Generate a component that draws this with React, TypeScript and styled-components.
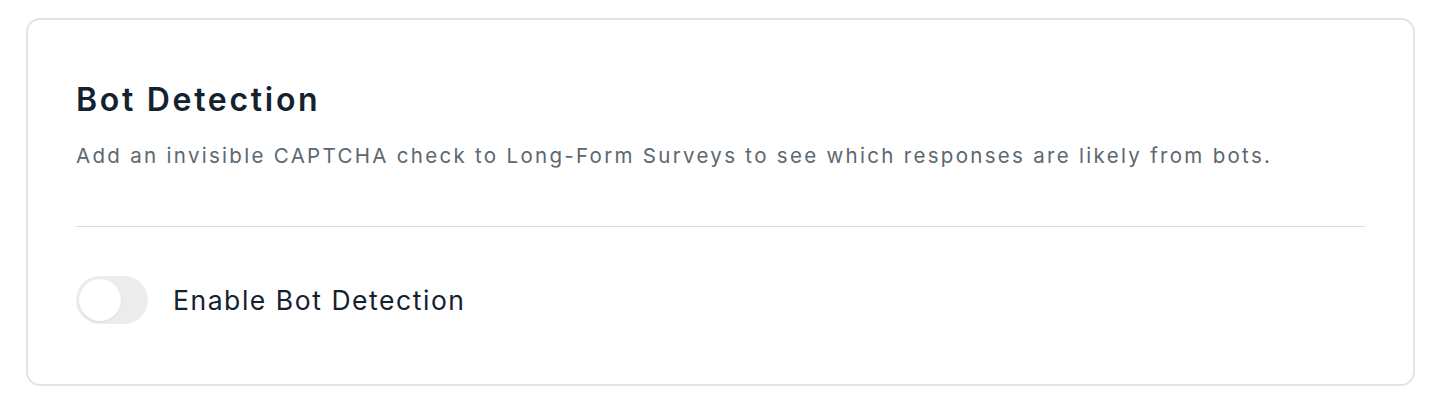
import React, { useState } from 'react';
import styled, { createGlobalStyle } from 'styled-components';

const GlobalStyle = createGlobalStyle`
    html, body {
        margin: 0;
        padding: 0;
        background: #ffffff;
    }
    body {
        font-family: Inter, 'Noto Sans', sans-serif;
        -webkit-font-smoothing: antialiased;
    }
`;

const Page = styled.div`
    padding: 18px 25px 20px 26px;
`;

const Card = styled.section`
    border: 2px solid #e4e4e4;
    border-radius: 14px;
    padding: 0 48px;
    background: #fff;
`;

const Header = styled.div`
    padding: 60px 0 56px;
    border-bottom: 1px solid #dcdcdc;
`;

const Title = styled.h2`
    margin: 0;
    font-size: 32px;
    line-height: 40px;
    font-weight: 600;
    color: #13222e;
    letter-spacing: 2.7px;
`;

const Description = styled.p`
    margin: 22px 0 0;
    font-size: 20.5px;
    line-height: 28px;
    color: #5c6770;
    letter-spacing: 2.3px;
    white-space: nowrap;
`;

const ToggleRow = styled.label`
    display: flex;
    align-items: center;
    gap: 25px;
    padding: 49px 0 60px;
    cursor: pointer;
`;

const Track = styled.span<{ $on: boolean }>`
    position: relative;
    width: 72px;
    height: 48px;
    border-radius: 24px;
    background: ${(p) => (p.$on ? '#1f7a5c' : '#ececec')};
    flex-shrink: 0;
    transition: background 0.2s;
`;

const Knob = styled.span<{ $on: boolean }>`
    position: absolute;
    top: 3px;
    left: ${(p) => (p.$on ? '27px' : '3px')};
    width: 42px;
    height: 42px;
    border-radius: 50%;
    background: #ffffff;
    box-shadow: 0 1px 2px rgba(0, 0, 0, 0.08);
    transition: left 0.2s;
`;

const ToggleLabel = styled.span`
    font-size: 26.5px;
    color: #13222e;
    letter-spacing: 1.55px;
`;

export default function App() {
    const [enabled, setEnabled] = useState(false);

    return (
        <>
            <GlobalStyle />
            <Page>
                <Card>
                    <Header>
                        <Title>Bot Detection</Title>
                        <Description>
                            Add an invisible CAPTCHA check to Long-Form Surveys to see which
                            responses are likely from bots.
                        </Description>
                    </Header>
                    <ToggleRow onClick={() => setEnabled(!enabled)}>
                        <Track $on={enabled}>
                            <Knob $on={enabled} />
                        </Track>
                        <ToggleLabel>Enable Bot Detection</ToggleLabel>
                    </ToggleRow>
                </Card>
            </Page>
        </>
    );
}
